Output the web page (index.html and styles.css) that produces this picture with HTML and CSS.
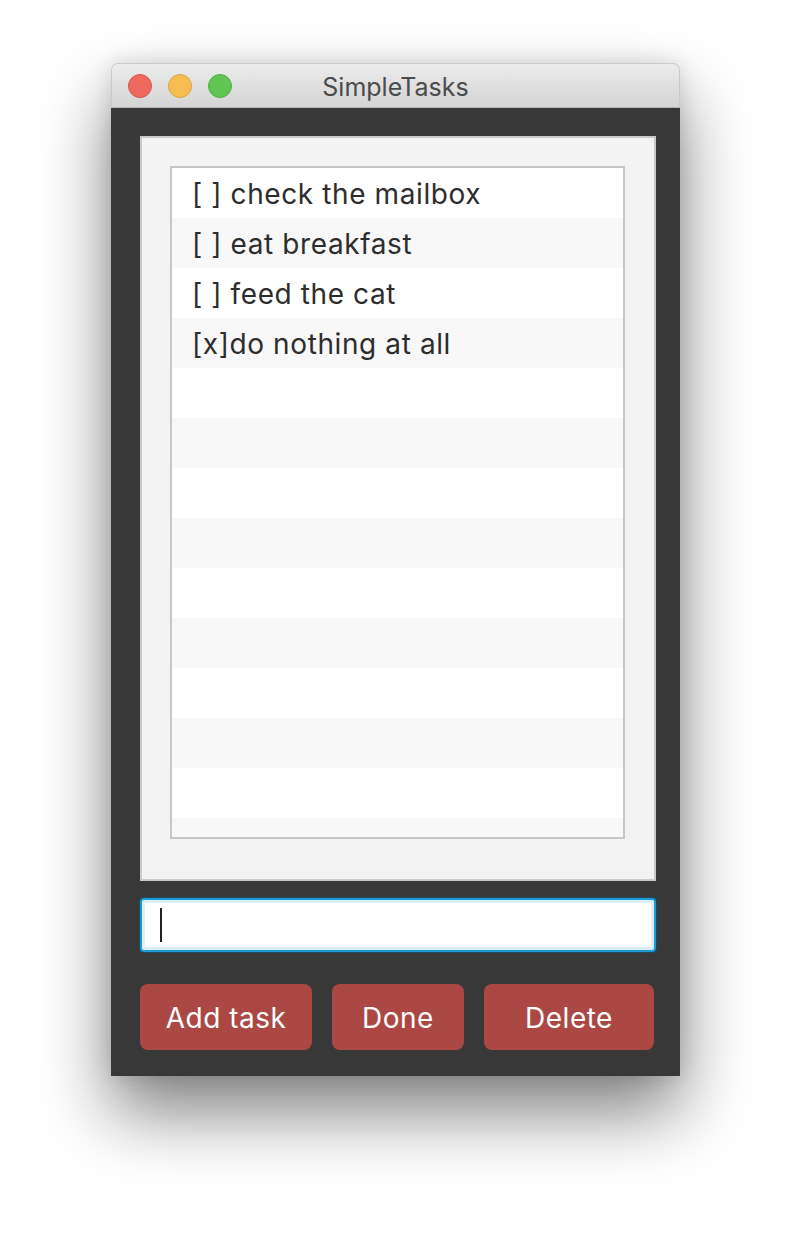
FILE: index.html
```html
<!DOCTYPE html>
<html>
<head>
<meta charset="utf-8">
<link rel="stylesheet" href="styles.css">
<title>SimpleTasks</title>
</head>
<body>
<div class="stage">
  <div class="window">
    <div class="titlebar">
      <div class="lights">
        <span class="light red"></span>
        <span class="light yellow"></span>
        <span class="light green"></span>
      </div>
      <div class="title">SimpleTasks</div>
    </div>
    <div class="content">
      <div class="panel">
        <ul class="list">
          <li class="row">[ ] check the mailbox</li>
          <li class="row">[ ] eat breakfast</li>
          <li class="row">[ ] feed the cat</li>
          <li class="row">[x]do nothing at all</li>
          <li class="row"></li>
          <li class="row"></li>
          <li class="row"></li>
          <li class="row"></li>
          <li class="row"></li>
          <li class="row"></li>
          <li class="row"></li>
          <li class="row"></li>
          <li class="row"></li>
          <li class="row"></li>
        </ul>
      </div>
      <div class="input"><span class="caret"></span></div>
      <div class="buttons">
        <button class="btn">Add task</button>
        <button class="btn">Done</button>
        <button class="btn">Delete</button>
      </div>
    </div>
  </div>
</div>
</body>
</html>
```
FILE: styles.css
```css
html, body {
  margin: 0;
  padding: 0;
  background: #ffffff;
}
body {
  font-family: "Inter", "Liberation Sans", sans-serif;
}
.stage {
  box-sizing: border-box;
  min-height: 1236px;
  padding: 63px 0 0 111px;
}
.window {
  width: 569px;
  border-radius: 7px 7px 0 0;
  box-shadow: 0 36px 70px rgba(0, 0, 0, 0.5), 0 0 20px rgba(0, 0, 0, 0.12);
}
.titlebar {
  position: relative;
  box-sizing: border-box;
  height: 45px;
  background: linear-gradient(#ececec, #d4d4d4);
  border: 1px solid #c9c9c9;
  border-bottom: 1px solid #b5b5b5;
  border-radius: 7px 7px 0 0;
  display: flex;
  align-items: center;
  justify-content: center;
}
.lights {
  position: absolute;
  left: 16px;
  top: 10px;
  display: flex;
  gap: 16px;
}
.light {
  display: block;
  box-sizing: border-box;
  width: 24px;
  height: 24px;
  border-radius: 50%;
}
.red { background: #ee6a5f; border: 1px solid #d9534a; }
.yellow { background: #f6be50; border: 1px solid #dba541; }
.green { background: #61c554; border: 1px solid #4fae40; }
.title {
  font-size: 25px;
  color: #4b4b4b;
  margin-top: 3px;
}
.content {
  background: #383838;
  padding: 28px 24px 26px 29px;
}
.panel {
  box-sizing: border-box;
  height: 745px;
  background: #f3f3f3;
  border: 2px solid #c9c9c9;
  padding: 28px 29px 40px 28px;
}
.list {
  box-sizing: border-box;
  height: 673px;
  margin: 0;
  padding: 0;
  list-style: none;
  border: 2px solid #c6c6c6;
  overflow: hidden;
  background: #f8f8f8;
}
.row {
  height: 50px;
  box-sizing: border-box;
  padding: 2px 0 0 20px;
  display: flex;
  align-items: center;
  font-size: 28px;
  letter-spacing: 0.6px;
  color: #2d2d2d;
  background: #ffffff;
  white-space: pre;
}
.row:nth-child(even) {
  background: #f8f8f8;
}
.input {
  box-sizing: border-box;
  margin-top: 17px;
  height: 54px;
  border: 2px solid #1a9ad6;
  border-radius: 4px;
  background: #ffffff;
  box-shadow: inset 0 0 0 3px #dbeff9, 0 0 0 1px rgba(10, 90, 130, 0.5);
  padding: 8px 0 0 18px;
}
.caret {
  display: block;
  width: 2px;
  height: 34px;
  background: #222;
}
.buttons {
  margin-top: 32px;
  display: grid;
  grid-template-columns: 172px 132px 170px;
  column-gap: 20px;
}
.btn {
  height: 66px;
  border: none;
  border-radius: 8px;
  background: #ab4844;
  color: #ffffff;
  font-family: "Inter", "Liberation Sans", sans-serif;
  font-size: 28px;
  letter-spacing: 0.5px;
  padding: 2px 0 0 0;
}
```
